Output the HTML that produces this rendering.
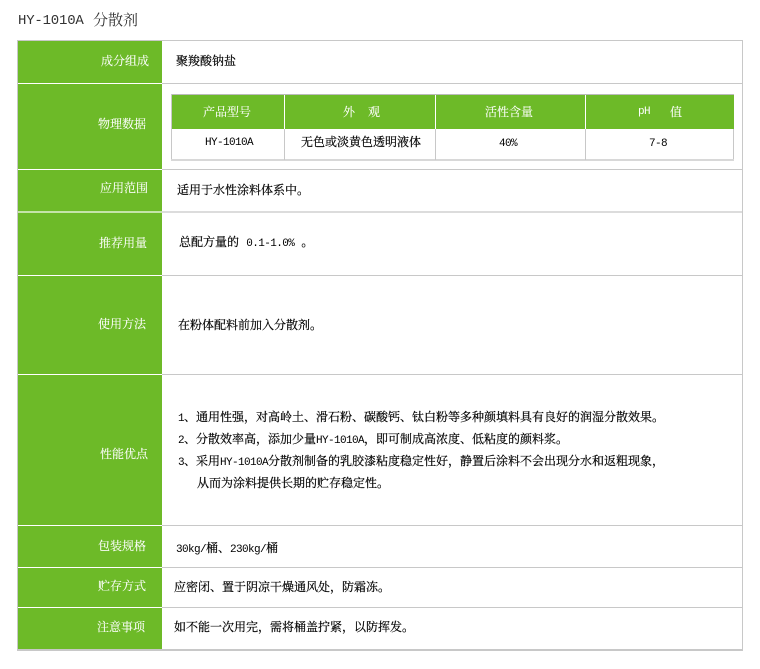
<!DOCTYPE html>
<html lang="zh"><head><meta charset="utf-8"><title>HY-1010A 分散剂</title>
<style>
html,body{margin:0;padding:0;background:#fff}
body{width:760px;height:669px;position:relative;overflow:hidden;font-family:"Liberation Mono","Noto Serif CJK SC",serif;font-size:12px;color:#000}
div{position:absolute}
.t{white-space:nowrap;line-height:14px;height:14px;-webkit-text-stroke:.2px currentColor}
.w{color:#fff;-webkit-text-stroke:.1px currentColor}
.g{background:#6dba28}
.l{background:#c8c8c8}
.m{font-size:11px;letter-spacing:-.6px;-webkit-text-stroke:0}
.h{-webkit-text-stroke:0}
</style></head><body>
<div class="t h" style="left:18px;top:13px;font-size:14px;line-height:17px;height:17px;color:#333;letter-spacing:-.2px">HY-1010A</div>
<div class="t h" style="left:93px;top:13px;font-size:15px;line-height:17px;height:17px;color:#333">分散剂</div>

<div class="l" style="left:17px;top:40px;width:726px;height:1px"></div>
<div class="l" style="left:17px;top:40px;width:1px;height:611px"></div>
<div class="l" style="left:742px;top:40px;width:1px;height:611px"></div>
<div class="l" style="left:17px;top:649px;width:726px;height:2px"></div>
<div class="g" style="left:18px;top:41px;width:144px;height:608px"></div>

<div class="l" style="left:162px;top:83px;width:580px;height:1px"></div>
<div class="l" style="left:162px;top:169px;width:580px;height:1px"></div>
<div style="left:162px;top:211px;width:580px;height:2px;background:#dcdcdc"></div>
<div class="l" style="left:162px;top:275px;width:580px;height:1px"></div>
<div class="l" style="left:162px;top:374px;width:580px;height:1px"></div>
<div class="l" style="left:162px;top:525px;width:580px;height:1px"></div>
<div class="l" style="left:162px;top:567px;width:580px;height:1px"></div>
<div class="l" style="left:162px;top:607px;width:580px;height:1px"></div>

<div style="left:18px;top:83px;width:144px;height:1px;background:#fff"></div>
<div style="left:18px;top:169px;width:144px;height:1px;background:#fff"></div>
<div style="left:18px;top:211px;width:144px;height:2px;background:#c5e4a8"></div>
<div style="left:18px;top:275px;width:144px;height:1px;background:#fff"></div>
<div style="left:18px;top:374px;width:144px;height:1px;background:#fff"></div>
<div style="left:18px;top:525px;width:144px;height:1px;background:#fff"></div>
<div style="left:18px;top:567px;width:144px;height:1px;background:#fff"></div>
<div style="left:18px;top:607px;width:144px;height:1px;background:#fff"></div>

<div class="t w" style="left:101px;top:55px">成分组成</div>
<div class="t w" style="left:98px;top:118px">物理数据</div>
<div class="t w" style="left:100px;top:182px">应用范围</div>
<div class="t w" style="left:99px;top:237px">推荐用量</div>
<div class="t w" style="left:98px;top:318px">使用方法</div>
<div class="t w" style="left:100px;top:448px">性能优点</div>
<div class="t w" style="left:98px;top:540px">包装规格</div>
<div class="t w" style="left:98px;top:580px">贮存方式</div>
<div class="t w" style="left:97px;top:621px">注意事项</div>

<div class="t" style="left:176px;top:55px">聚羧酸钠盐</div>
<div class="t" style="left:177px;top:184px">适用于水性涂料体系中。</div>
<div class="t" style="left:179px;top:236px">总配方量的 <span class="m">0.1-1.0%</span> 。</div>
<div class="t" style="left:178px;top:319px">在粉体配料前加入分散剂。</div>
<div class="t" style="left:178px;top:411px"><span class="m">1</span>、通用性强，对高岭土、滑石粉、碳酸钙、钛白粉等多种颜填料具有良好的润湿分散效果。</div>
<div class="t" style="left:178px;top:433px"><span class="m">2</span>、分散效率高，添加少量<span class="m">HY-1010A</span>，即可制成高浓度、低粘度的颜料浆。</div>
<div class="t" style="left:178px;top:455px"><span class="m">3</span>、采用<span class="m">HY-1010A</span>分散剂制备的乳胶漆粘度稳定性好，静置后涂料不会出现分水和返粗现象，</div>
<div class="t" style="left:197px;top:477px">从而为涂料提供长期的贮存稳定性。</div>
<div class="t" style="left:176px;top:542px"><span class="m">30kg/</span>桶、<span class="m">230kg/</span>桶</div>
<div class="t" style="left:174px;top:581px">应密闭、置于阴凉干燥通风处，防霜冻。</div>
<div class="t" style="left:174px;top:621px">如不能一次用完，需将桶盖拧紧，以防挥发。</div>

<div class="g" style="left:171px;top:94px;width:563px;height:35px"></div>
<div style="left:171px;top:94px;width:563px;height:1px;background:#bbb"></div>
<div class="l" style="left:171px;top:94px;width:1px;height:66px"></div>
<div class="l" style="left:733px;top:129px;width:1px;height:31px"></div>
<div style="left:171px;top:159px;width:563px;height:2px;background:#d8d8d8"></div>
<div style="left:284px;top:95px;width:1px;height:34px;background:#fff"></div>
<div style="left:435px;top:95px;width:1px;height:34px;background:#fff"></div>
<div style="left:585px;top:95px;width:1px;height:34px;background:#fff"></div>
<div class="l" style="left:284px;top:129px;width:1px;height:31px"></div>
<div class="l" style="left:435px;top:129px;width:1px;height:31px"></div>
<div class="l" style="left:585px;top:129px;width:1px;height:31px"></div>

<div class="t w" style="left:203px;top:106px">产品型号</div>
<div class="t w" style="left:343px;top:106px">外</div>
<div class="t w" style="left:368px;top:106px">观</div>
<div class="t w" style="left:485px;top:106px">活性含量</div>
<div class="t w m" style="left:638px;top:105px">pH</div>
<div class="t w" style="left:670px;top:106px">值</div>
<div class="t m" style="left:205px;top:136px">HY-1010A</div>
<div class="t" style="left:301px;top:136px">无色或淡黄色透明液体</div>
<div class="t m" style="left:499px;top:137px">40%</div>
<div class="t m" style="left:649px;top:137px">7-8</div>
</body></html>
